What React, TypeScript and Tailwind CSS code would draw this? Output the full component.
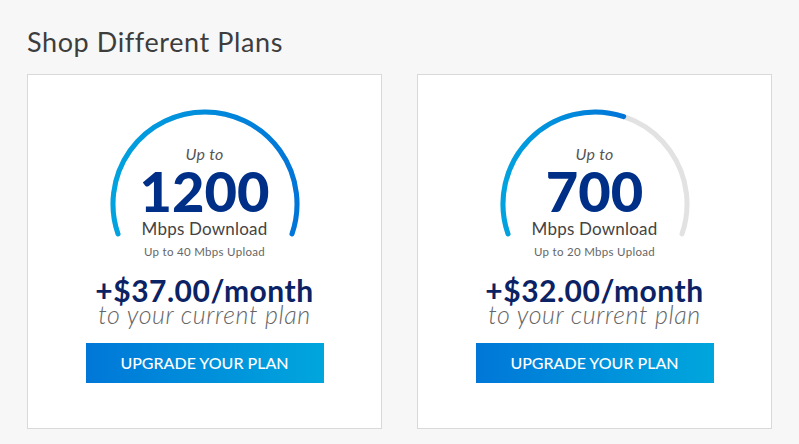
const plans = [
  { speed: '1200', upload: 'Up to 40 Mbps Upload', price: '+$37.00/month', fill: 1 },
  { speed: '700', upload: 'Up to 20 Mbps Upload', price: '+$32.00/month', fill: 700 / 1200 },
]

function Gauge({ fill, id }: { fill: number; id: string }) {
  // arc from lower-left to lower-right, 218 degrees sweep
  const cx = 98
  const cy = 95
  const r = 92
  const start = 199
  const sweep = 218
  const pt = (deg: number) => {
    const a = (deg * Math.PI) / 180
    return [cx + r * Math.cos(a), cy - r * Math.sin(a)]
  }
  const arc = (from: number, to: number) => {
    const [x1, y1] = pt(from)
    const [x2, y2] = pt(to)
    const large = from - to > 180 ? 1 : 0
    return `M ${x1} ${y1} A ${r} ${r} 0 ${large} 1 ${x2} ${y2}`
  }
  const end = start - sweep * fill
  return (
    <svg width="196" height="132" viewBox="0 0 196 132" className="absolute left-0 top-0">
      <defs>
        <linearGradient id={id} x1="0" y1="0" x2="1" y2="0">
          <stop offset="0%" stopColor="#00a3e0" />
          <stop offset="100%" stopColor="#0075d9" />
        </linearGradient>
      </defs>
      <path d={arc(start, start - sweep)} fill="none" stroke="#e2e2e2" strokeWidth="5" strokeLinecap="round" />
      <path d={arc(start, end)} fill="none" stroke={`url(#${id})`} strokeWidth="5" strokeLinecap="round" />
    </svg>
  )
}

export default function App() {
  return (
    <main className="min-h-screen bg-[#f7f7f7] px-[27px] pt-[25px]" style={{ fontFamily: 'Lato, "Open Sans", sans-serif' }}>
      <h1 className="text-[27px] leading-[34px] text-[#3d3d3d] tracking-[0.6px] mb-[15px]">Shop Different Plans</h1>
      <div className="flex gap-[35px]">
        {plans.map((p, i) => (
          <div key={i} className="w-[357px] h-[355px] bg-white border border-[#d9d9d9] flex flex-col items-center pt-[34px]">
            <div className="relative w-[196px] h-[150px] flex flex-col items-center pt-[36px]">
              <Gauge fill={p.fill} id={`g${i}`} />
              <div className="relative italic text-[16px] leading-[18px] text-[#555] tracking-[0.3px]">Up to</div>
              <div className="relative font-black text-[56px] leading-[56px] text-[#002f87]">{p.speed}</div>
              <div className="relative text-[17px] leading-[20px] text-[#444] tracking-[0.2px]">Mbps Download</div>
              <div className="relative text-[11.5px] leading-[14px] mt-[6px] text-[#666] tracking-[0.3px]">{p.upload}</div>
            </div>
            <div className="mt-[18px] font-bold text-[30px] leading-[26px] text-[#0b2265] tracking-[0.5px]">{p.price}</div>
            <div className="italic font-light text-[25px] leading-[22px] text-[#666] tracking-[0.6px]">to your current plan</div>
            <button className="mt-[18px] w-[238px] h-[40px] bg-gradient-to-r from-[#0077d8] to-[#00a6dd] text-white text-[16px] font-medium">
              UPGRADE YOUR PLAN
            </button>
          </div>
        ))}
      </div>
    </main>
  )
}
